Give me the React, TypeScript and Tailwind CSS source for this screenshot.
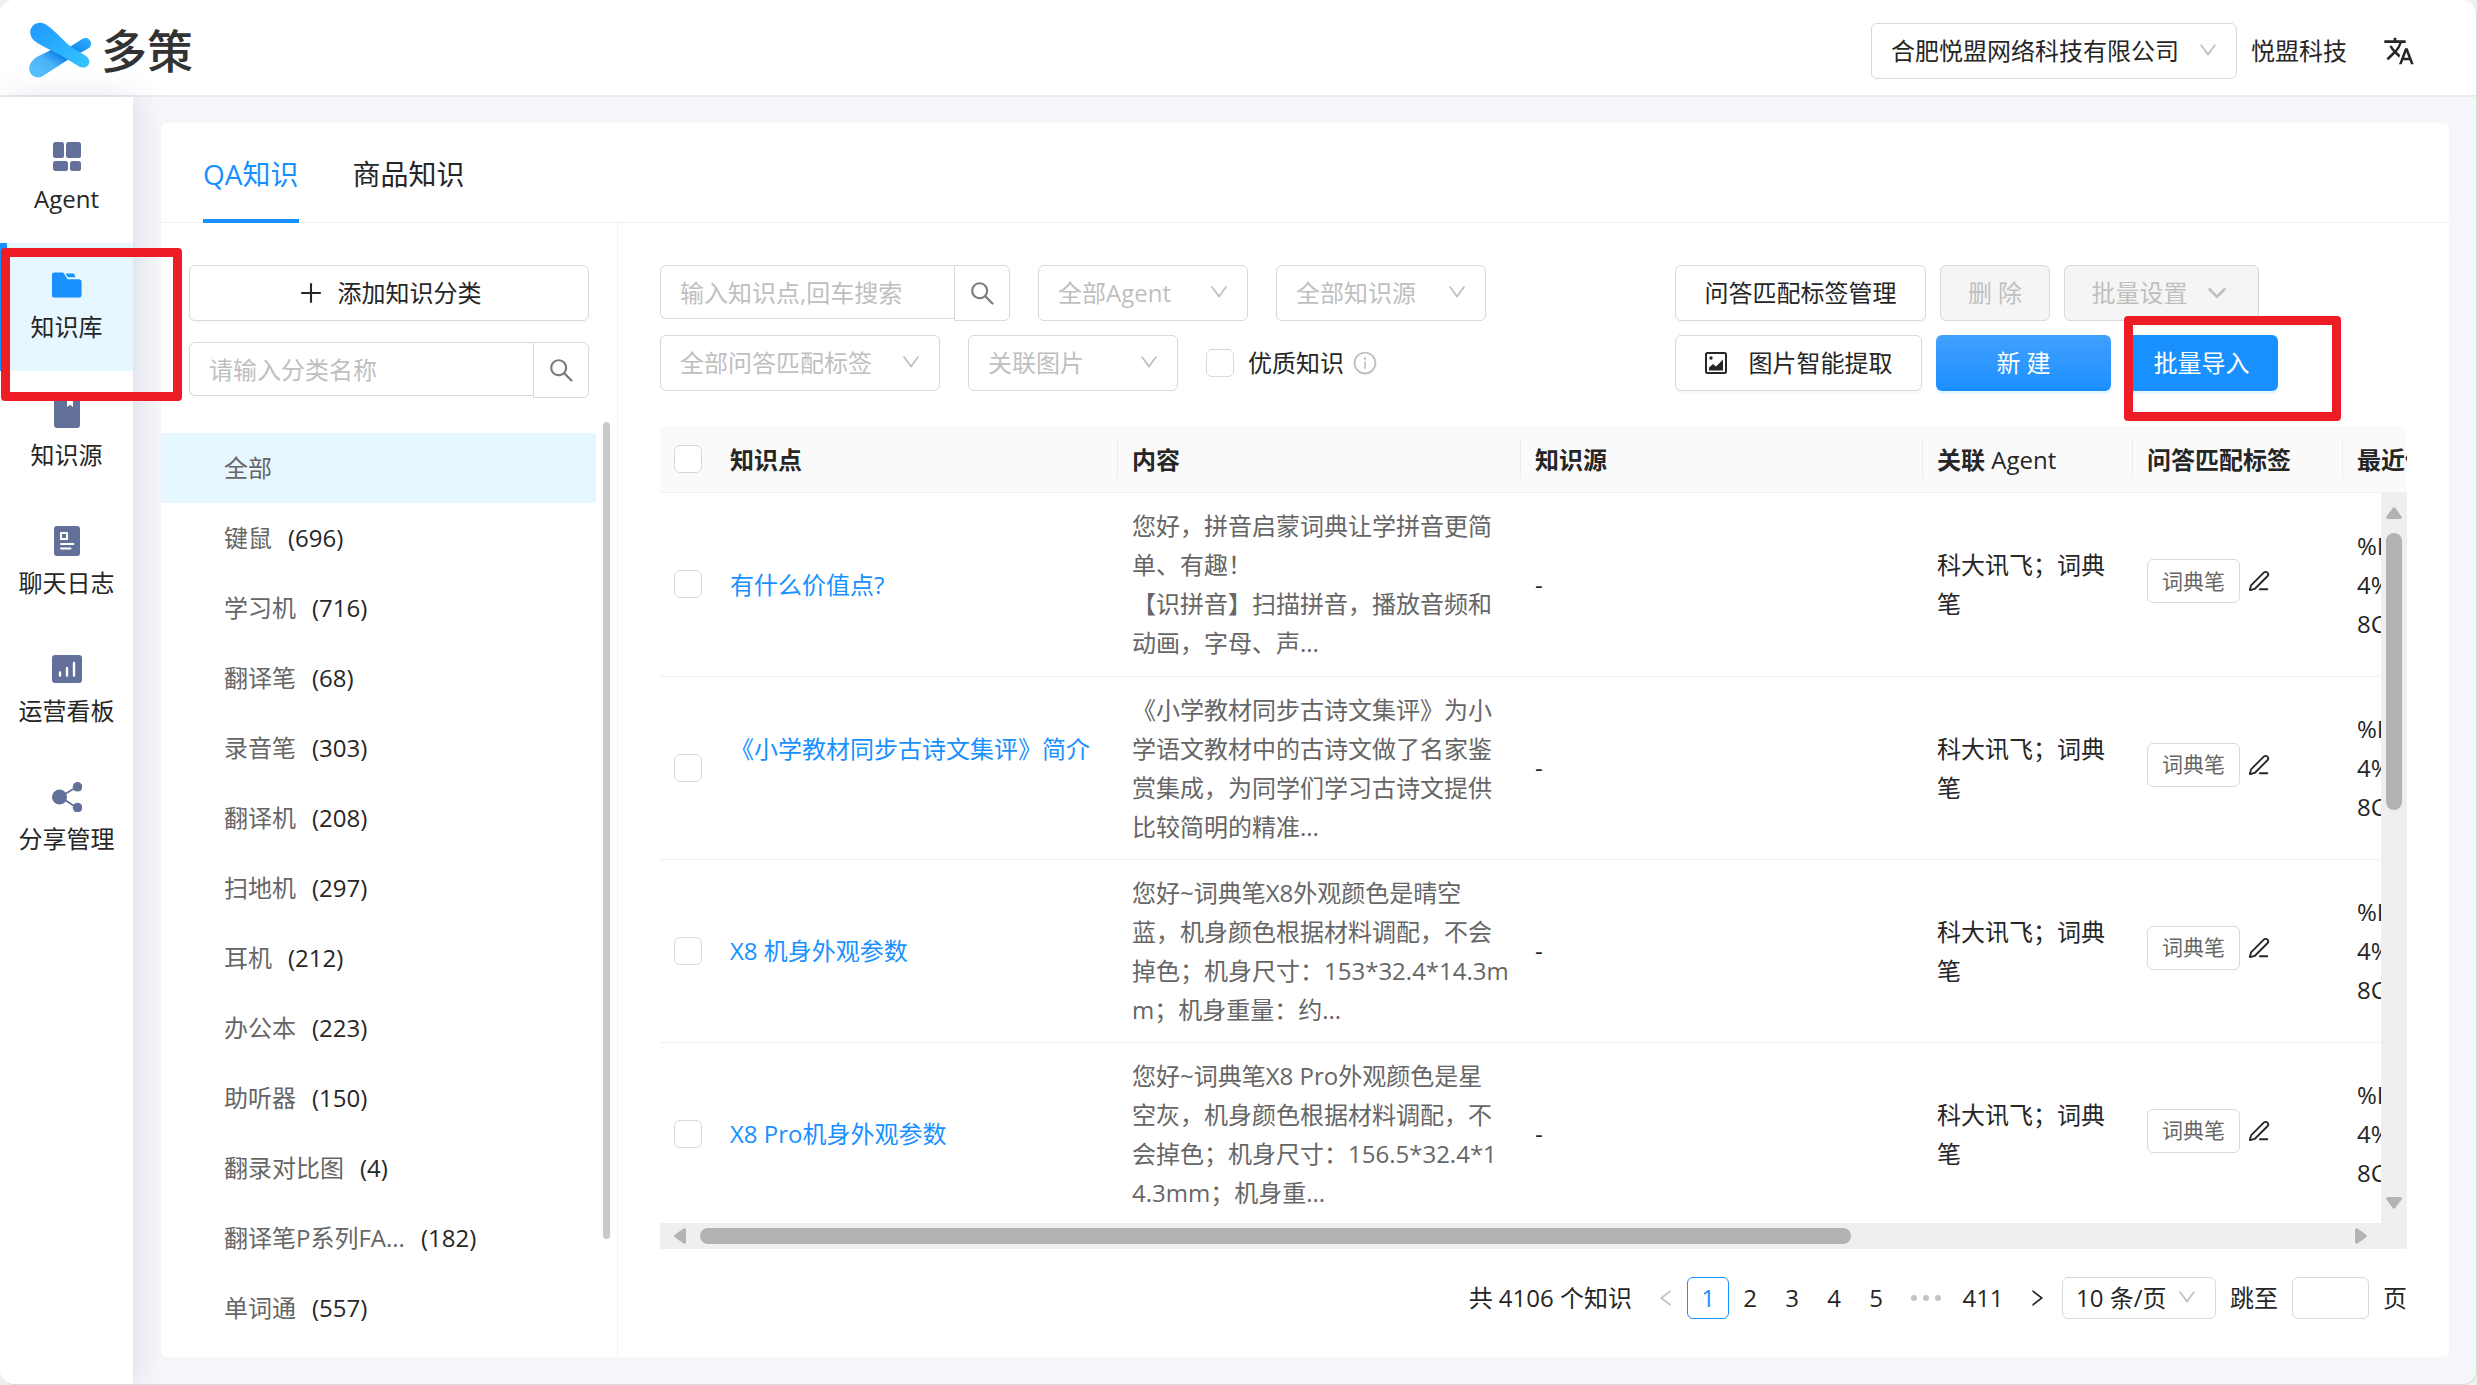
import React from "react";
import {
  AiOutlineDown,
  AiOutlineInfoCircle,
  AiOutlineLeft,
  AiOutlinePlus,
  AiOutlineRight,
  AiOutlineSearch,
} from "react-icons/ai";
import { MdTranslate } from "react-icons/md";
import { ChevronDown, PenLine } from "lucide-react";

const navItems = [
  { label: "Agent", icon: "agent" },
  { label: "知识库", icon: "folder" },
  { label: "知识源", icon: "source" },
  { label: "聊天日志", icon: "log" },
  { label: "运营看板", icon: "board" },
  { label: "分享管理", icon: "share" },
];

const categories: { name: string; count?: number }[] = [
  { name: "全部" },
  { name: "键鼠", count: 696 },
  { name: "学习机", count: 716 },
  { name: "翻译笔", count: 68 },
  { name: "录音笔", count: 303 },
  { name: "翻译机", count: 208 },
  { name: "扫地机", count: 297 },
  { name: "耳机", count: 212 },
  { name: "办公本", count: 223 },
  { name: "助听器", count: 150 },
  { name: "翻录对比图", count: 4 },
  { name: "翻译笔P系列FA...", count: 182 },
  { name: "单词通", count: 557 },
];

const rows = [
  {
    title: "有什么价值点?",
    tall: false,
    content: ["您好，拼音启蒙词典让学拼音更简", "单、有趣！", "【识拼音】扫描拼音，播放音频和", "动画，字母、声..."],
  },
  {
    title: "《小学教材同步古诗文集评》简介",
    tall: true,
    content: ["《小学教材同步古诗文集评》为小", "学语文教材中的古诗文做了名家鉴", "赏集成，为同学们学习古诗文提供", "比较简明的精准..."],
  },
  {
    title: "X8 机身外观参数",
    tall: false,
    content: ["您好~词典笔X8外观颜色是晴空", "蓝，机身颜色根据材料调配，不会", "掉色；机身尺寸：153*32.4*14.3m", "m；机身重量：约..."],
  },
  {
    title: "X8 Pro机身外观参数",
    tall: false,
    content: ["您好~词典笔X8 Pro外观颜色是星", "空灰，机身颜色根据材料调配，不", "会掉色；机身尺寸：156.5*32.4*1", "4.3mm；机身重..."],
  },
];

function NavIcon({ name }: { name: string }) {
  const c = "#62709a";
  switch (name) {
    case "agent":
      return (
        <svg width="30" height="30" viewBox="0 0 30 30" fill={c}>
          <rect x="1" y="0" width="11" height="16" rx="2.5" />
          <rect x="14" y="0" width="15" height="16" rx="2.5" />
          <rect x="1" y="19" width="15" height="10" rx="2.5" />
          <rect x="18" y="19" width="11" height="10" rx="2.5" />
        </svg>
      );
    case "folder":
      return (
        <svg width="30" height="30" viewBox="0 0 31 30" fill="#1890ff">
          <path d="M2 2h8.500c.8 0 1.300.3 1.700.9L16 9h12c1.400 0 2.500 1 2.500 2.300V25.500c0 1.400-1.100 2.500-2.500 2.500H2C.8 28 0 27 0 25.800V4.300C0 3 .8 2 2 2z" />
          <path d="M14 3h7.500c.9 0 1.500.5 1.800 1.300l.9 2.700h-7.700z" />
        </svg>
      );
    case "source":
      return (
        <svg width="30" height="30" viewBox="0 0 30 30" fill={c}>
          <path d="M5 0h20c1.700 0 3 1.200 3 3v24c0 1.700-1.300 3-3 3H5c-1.700 0-3-1.300-3-3V3c0-1.800 1.300-3 3-3z" />
          <path d="M15 1h6v8l-3-2.200L15 9z" fill="#fff" />
        </svg>
      );
    case "log":
      return (
        <svg width="30" height="30" viewBox="0 0 30 30">
          <rect x="2" y="0" width="26" height="30" rx="3" fill={c} />
          <rect x="9" y="7" width="6" height="6" fill="none" stroke="#fff" strokeWidth="2" />
          <path d="M9 18h12.500M9 22.500h9.500" stroke="#fff" strokeWidth="2" strokeLinecap="round" />
        </svg>
      );
    case "board":
      return (
        <svg width="30" height="30" viewBox="0 0 30 30">
          <rect x="0" y="1" width="30" height="28" rx="3" fill={c} />
          <path d="M8 18.500v3M15 14v7.500M22 9v12.500" stroke="#fff" strokeWidth="2.400" strokeLinecap="round" />
        </svg>
      );
    default:
      return (
        <svg width="30" height="30" viewBox="0 0 30 30" fill={c}>
          <path d="M8 15 25.500 4.500M8 15l17.500 11" stroke={c} strokeWidth="1.800" />
          <circle cx="7.500" cy="15" r="7.500" />
          <circle cx="25.500" cy="4.800" r="4.800" />
          <circle cx="25.500" cy="25.500" r="4.800" />
        </svg>
      );
  }
}

function LogoMark() {
  return (
    <svg width="64" height="58" viewBox="0 2 64 56">
      <defs>
        <linearGradient id="armTop" x1="0" y1="0" x2="1" y2="1">
          <stop offset="0" stopColor="#1f97ff" />
          <stop offset="1" stopColor="#35c6ff" />
        </linearGradient>
        <linearGradient id="armLow" x1="0" y1="1" x2="1" y2="0">
          <stop offset="0" stopColor="#5cc4fb" />
          <stop offset="0.350" stopColor="#4ab4f8" />
          <stop offset="0.550" stopColor="#0d7be6" />
          <stop offset="0.750" stopColor="#1a90f2" />
          <stop offset="1" stopColor="#2fb0fa" />
        </linearGradient>
      </defs>
      <path
        d="M6 39 C9 36 16 34 21 31 C25 29 25 27 23 25 L40 28 L55 18.500 C61 16 66 23 61 28 L38 41 C29 47 21 52 14 56.500 C5 61-5 49 6 39z"
        fill="url(#armLow)"
      />
      <path
        d="M18 4.500 C25 9 35 20 43 27 L58 36 C65 41 60 50 52 47 L37 38 C28 32 16 28 6 20.500 C-4 10 8-2 18 4.500z"
        fill="url(#armTop)"
      />
    </svg>
  );
}

function PictureIcon() {
  return (
    <svg width="22" height="22" viewBox="0 0 22 22">
      <rect x="1" y="1" width="20" height="20" rx="1.500" fill="none" stroke="#262626" strokeWidth="2" />
      <circle cx="6" cy="6" r="1.700" fill="#262626" />
      <path d="M4 18.500v-3l4-3.500 3 2.500 7-7v11z" fill="#262626" />
    </svg>
  );
}

function Dropdown({ label, width, dark = false }: { label: string; width: string; dark?: boolean }) {
  return (
    <div className={`relative flex h-14 ${width}`}>
      <select
        aria-label={label}
        className={`w-full appearance-none rounded-md border border-[#d9d9d9] bg-white pl-[19px] pr-8 outline-none ${dark ? "text-[#262626]" : "text-[#bfbfbf]"}`}
      >
        <option>{label}</option>
      </select>
      <AiOutlineDown className="pointer-events-none absolute right-[18px] top-4 text-[#bfbfbf]" size={22} />
    </div>
  );
}

function SearchBox({ placeholder }: { placeholder: string }) {
  return (
    <form className="flex" onSubmit={(e) => e.preventDefault()}>
      <input
        type="text"
        aria-label={placeholder}
        placeholder={placeholder}
        className="h-[54px] w-full min-w-0 rounded-l-md border border-r-0 border-[#d9d9d9] bg-white pl-[19px] outline-none placeholder:text-[#bfbfbf]"
      />
      <button
        type="submit"
        aria-label="搜索"
        className="flex h-14 w-14 shrink-0 items-center justify-center rounded-r-md border border-[#d9d9d9] bg-white text-[#7d7d7d]"
      >
        <AiOutlineSearch size={29} />
      </button>
    </form>
  );
}

function Check({ label }: { label: string }) {
  return (
    <input
      type="checkbox"
      aria-label={label}
      className="block size-7 shrink-0 appearance-none rounded-md border border-[#d9d9d9] bg-white checked:bg-[#1890ff]"
    />
  );
}

function Columns() {
  return (
    <colgroup>
      <col className="w-[56px]" />
      <col className="w-[402px]" />
      <col className="w-[403px]" />
      <col className="w-[402px]" />
      <col className="w-[210px]" />
      <col className="w-[210px]" />
      <col className="w-[350px]" />
    </colgroup>
  );
}

const plainButton =
  "flex h-14 items-center justify-center rounded-md border border-[#d9d9d9] bg-white text-[#262626] shadow-[0_3px_0_rgba(0,0,0,0.02)]";

const disabledButton =
  "flex h-14 items-center justify-center rounded-md border border-[#d9d9d9] bg-[#f5f5f5] text-[#bfbfbf]";

function Header() {
  return (
    <header className="flex h-[97px] shrink-0 items-center justify-between border-b-2 border-[#ececef] bg-white pl-7 pr-[61px]">
      <a href="#home" className="flex items-center gap-[9px] pt-1">
        <LogoMark />
        <span className="text-[46px] font-medium leading-[60px] text-[#333]">多策</span>
      </a>
      <div className="flex items-center pt-[6px]">
        <Dropdown label="合肥悦盟网络科技有限公司" width="w-[366px]" dark />
        <span className="ml-[14px]">悦盟科技</span>
        <button type="button" aria-label="切换语言" className="ml-9">
          <MdTranslate size={32} />
        </button>
      </div>
    </header>
  );
}

function SideNav() {
  return (
    <nav className="relative w-[133px] shrink-0 bg-white pt-[18px] shadow-[6px_0_28px_rgba(40,50,120,0.12)]">
      {navItems.map((item, i) => (
        <a
          key={item.label}
          href={`#${item.icon}`}
          className={`flex h-32 flex-col items-center gap-[9px] whitespace-nowrap pt-[27px] leading-9 ${i === 1 ? "bg-[#e6f7ff] shadow-[inset_7px_0_0_#1890ff]" : ""}`}
        >
          <NavIcon name={item.icon} />
          <span>{item.label}</span>
        </a>
      ))}
      <div className="pointer-events-none absolute left-px top-[151px] z-20 h-[153px] w-[181px] rounded border-[9px] border-[#ee1c25]" />
    </nav>
  );
}

function CategoryPanel() {
  return (
    <aside className="flex w-[457px] shrink-0 flex-col border-r border-[#f0f0f0] pt-[42px]">
      <div className="flex flex-col gap-[21px] pl-7 pr-7">
        <button type="button" className={`${plainButton} gap-[13px]`}>
          <AiOutlinePlus size={28} />
          添加知识分类
        </button>
        <SearchBox placeholder="请输入分类名称" />
      </div>
      <div className="mt-6 flex min-h-0 flex-1 gap-[7px] overflow-hidden pr-[7px]">
        <ul className="flex-1 pt-[11px]">
          {categories.map((c, i) => (
            <li key={c.name} className={`flex h-[70px] items-center gap-4 pl-[63px] ${i === 0 ? "bg-[#e6f7ff]" : ""}`}>
              <span className="text-[#666]">{c.name}</span>
              {c.count !== undefined && <span>({c.count})</span>}
            </li>
          ))}
        </ul>
        <div className="h-[817px] w-[7px] rounded-full bg-[#c9c9c9]" />
      </div>
    </aside>
  );
}

function Toolbar() {
  return (
    <div className="flex justify-between">
      <div className="flex flex-col gap-[14px]">
        <div className="flex gap-7">
          <div className="w-[350px]">
            <SearchBox placeholder="输入知识点,回车搜索" />
          </div>
          <Dropdown label="全部Agent" width="w-[210px]" />
          <Dropdown label="全部知识源" width="w-[210px]" />
        </div>
        <div className="flex gap-7">
          <Dropdown label="全部问答匹配标签" width="w-[280px]" />
          <Dropdown label="关联图片" width="w-[210px]" />
          <label className="flex items-center gap-[14px]">
            <Check label="优质知识" />
            <span className="flex items-center gap-2">
              优质知识
              <AiOutlineInfoCircle size={26} className="text-[#bfbfbf]" />
            </span>
          </label>
        </div>
      </div>
      <div className="flex w-[732px] flex-col gap-[14px]">
        <div className="flex gap-[14px]">
          <button type="button" className={`${plainButton} w-[251px]`}>问答匹配标签管理</button>
          <button type="button" disabled className={`${disabledButton} w-[110px]`}>删 除</button>
          <button type="button" disabled className={`${disabledButton} w-[195px] gap-[14px]`}>
            批量设置
            <ChevronDown size={30} strokeWidth={2} />
          </button>
        </div>
        <div className="flex gap-[14px]">
          <button type="button" className={`${plainButton} w-[247px] gap-[22px]`}>
            <PictureIcon />
            图片智能提取
          </button>
          <button
            type="button"
            className="h-14 w-[175px] rounded-md bg-linear-to-b from-[#40a0ff] to-[#1890ff] text-white shadow-[0_3px_0_#e6f7ff]"
          >
            新 建
          </button>
          <div className="relative">
            <button type="button" className="h-14 w-[153px] rounded-md bg-[#1890ff] text-white shadow-[0_3px_0_#e6f7ff]">
              批量导入
            </button>
            <div className="pointer-events-none absolute -left-px -top-[19px] h-[105px] w-[217px] rounded border-[9px] border-[#ee1c25]" />
          </div>
        </div>
      </div>
    </div>
  );
}

function KnowledgeTable() {
  const heads = [
    "知识点",
    "内容",
    "知识源",
    <React.Fragment key="agent">
      关联 <span className="font-normal">Agent</span>
    </React.Fragment>,
    "问答匹配标签",
    "最近修改",
  ];
  return (
    <div className="mt-[35px] flex min-h-0 flex-1 flex-col">
      <div className="overflow-hidden rounded-t-lg border-b border-[#f0f0f0] bg-[#fafafa]">
        <table className="w-[2033px] table-fixed">
          <Columns />
          <thead>
            <tr className="h-[66px] text-left">
              <th className="pl-[14px]">
                <Check label="全选" />
              </th>
              {heads.map((h, i) => (
                <th key={i} className="p-0 font-bold">
                  <div className={`h-[38px] pl-[14px] leading-10 ${i < 5 ? "border-r border-[#ececec]" : ""}`}>{h}</div>
                </th>
              ))}
            </tr>
          </thead>
        </table>
      </div>
      <div className="flex min-h-0 flex-1">
        <div className="min-w-0 flex-1 overflow-hidden">
          <table className="w-[2033px] table-fixed">
            <Columns />
            <tbody>
              {rows.map((r) => (
                <tr key={r.title} className="h-[183px] border-b border-[#f0f0f0] leading-[39px]">
                  <td className="pl-[14px]">
                    <Check label={r.title} />
                  </td>
                  <td className="whitespace-nowrap pl-[14px]">
                    <div className={r.tall ? "min-h-[78px]" : ""}>
                      <a href="#detail" className="text-[#1890ff]">
                        {r.title}
                      </a>
                    </div>
                  </td>
                  <td className="whitespace-nowrap pl-[14px] text-[#666]">
                    {r.content.map((line) => (
                      <div key={line}>{line}</div>
                    ))}
                  </td>
                  <td className="pl-[14px]">-</td>
                  <td className="px-[14px]">科大讯飞；词典笔</td>
                  <td className="pl-[14px]">
                    <div className="flex items-center gap-2 pb-[6px]">
                      <span className="flex h-11 w-[93px] items-center justify-center rounded-md border border-[#d9d9d9] text-[21px] text-[#666]">
                        词典笔
                      </span>
                      <button type="button" aria-label="编辑标签">
                        <PenLine size={22} strokeWidth={2} />
                      </button>
                    </div>
                  </td>
                  <td className="pl-[14px]">
                    <div>%E</div>
                    <div>4%B</div>
                    <div>8C</div>
                  </td>
                </tr>
              ))}
            </tbody>
          </table>
        </div>
        <div className="flex w-[26px] flex-col items-center bg-[#efefef] py-[14px]">
          <svg width="16" height="12" viewBox="0 0 16 12" fill="#b3b3b3">
            <path d="M6.500 1.200q1.500-2 3 0l6 8.300q1 2.500-1.500 2.500H2q-2.500 0-1.500-2.500z" />
          </svg>
          <div className="mt-[14px] h-[277px] w-4 rounded-full bg-[#b3b3b3]" />
          <svg className="mt-auto" width="16" height="12" viewBox="0 0 16 12" fill="#b3b3b3">
            <path d="M6.500 10.800q1.500 2 3 0l6-8.300q1-2.500-1.500-2.500H2q-2.500 0-1.500 2.500z" />
          </svg>
        </div>
      </div>
      <div className="flex h-[26px] shrink-0 items-center bg-[#efefef] pl-[14px] pr-10">
        <svg width="12" height="16" viewBox="0 0 12 16" fill="#b3b3b3">
          <path d="M1.200 6.500q-2 1.500 0 3l8.300 6q2.500 1 2.500-1.500V2q0-2.500-2.500-1.500z" />
        </svg>
        <div className="ml-[14px] h-4 w-[68%] rounded-full bg-[#b3b3b3]" />
        <svg className="ml-auto" width="12" height="16" viewBox="0 0 12 16" fill="#b3b3b3">
          <path d="M10.800 6.500q2 1.500 0 3l-8.300 6q-2.500 1-2.500-1.500V2q0-2.500 2.500-1.500z" />
        </svg>
      </div>
    </div>
  );
}

function Pagination() {
  const page = "flex h-[42px] w-[42px] items-center justify-center";
  return (
    <div className="mt-7 flex h-[42px] shrink-0 items-center justify-end">
      <span className="mr-[13px]">共 4106 个知识</span>
      <button type="button" aria-label="上一页" disabled className={`${page} text-[#bfbfbf]`}>
        <AiOutlineLeft size={22} />
      </button>
      <button type="button" className={`${page} rounded-md border border-[#1890ff] font-medium text-[#1890ff]`}>1</button>
      {[2, 3, 4, 5].map((n) => (
        <button key={n} type="button" className={page}>
          {n}
        </button>
      ))}
      <span className="flex w-[58px] justify-center">
        <svg width="32" height="8" viewBox="0 0 32 8" fill="#c4c4c4">
          <circle cx="4" cy="4" r="3" />
          <circle cx="16" cy="4" r="3" />
          <circle cx="28" cy="4" r="3" />
        </svg>
      </span>
      <button type="button" className="flex h-[42px] w-14 items-center justify-center">411</button>
      <button type="button" aria-label="下一页" className="flex h-[42px] w-[51px] items-center justify-center">
        <AiOutlineRight size={22} />
      </button>
      <div className="relative flex h-[42px] w-[154px]">
        <select aria-label="每页条数" className="w-full appearance-none rounded-md border border-[#d9d9d9] bg-white pl-[13px] outline-none">
          <option>10 条/页</option>
        </select>
        <AiOutlineDown className="pointer-events-none absolute right-[18px] top-[9px] text-[#bfbfbf]" size={22} />
      </div>
      <label className="ml-[14px] flex items-center gap-[14px]">
        跳至
        <input type="text" className="h-[42px] w-[77px] rounded-md border border-[#d9d9d9] bg-white px-3 outline-none" />
        页
      </label>
    </div>
  );
}

export default function App() {
  return (
    <div className="h-screen bg-[#f0f0f0]">
      <div className='flex h-full flex-col overflow-hidden rounded-[14px] border-b border-r border-[#d9dadd] bg-[#f6f7fa] font-["Open_Sans","Noto_Sans_CJK_SC",sans-serif] text-[24px] leading-[38px] text-[#262626]'>
        <Header />
        <div className="flex min-h-0 flex-1">
          <SideNav />
          <main className="mb-[27px] ml-7 mr-[27px] mt-[26px] flex min-w-0 flex-1 flex-col">
            <section className="relative flex min-h-0 flex-1 flex-col rounded-md bg-white">
              <div role="tablist" className="flex h-[100px] shrink-0 gap-[54px] border-b border-[#f0f0f0] px-[42px] text-[28px]">
                <button type="button" role="tab" aria-selected="true" className="h-[100px] border-b-4 border-[#1890ff] pt-[6px] text-[#1890ff]">
                  QA知识
                </button>
                <button type="button" role="tab" aria-selected="false" className="h-[100px] border-b-4 border-transparent pt-[6px]">
                  商品知识
                </button>
              </div>
              <div className="flex min-h-0 flex-1">
                <CategoryPanel />
                <div className="flex min-w-0 flex-1 flex-col px-[42px] pb-[38px] pt-[42px]">
                  <Toolbar />
                  <KnowledgeTable />
                  <Pagination />
                </div>
              </div>
            </section>
          </main>
        </div>
      </div>
    </div>
  );
}
